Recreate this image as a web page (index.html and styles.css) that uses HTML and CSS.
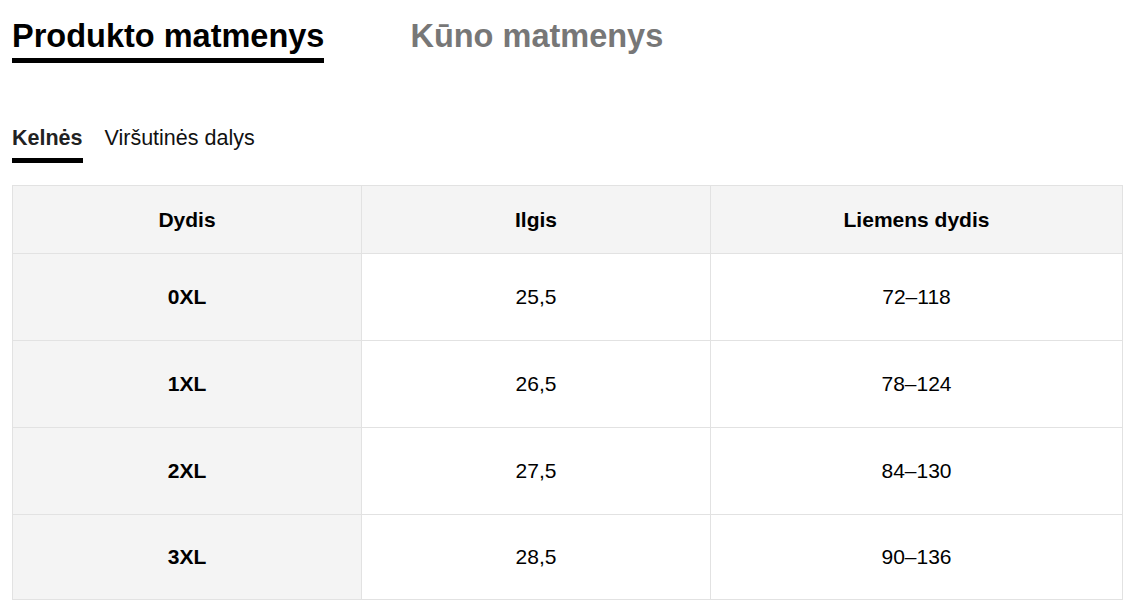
FILE: index.html
```html
<!DOCTYPE html>
<html lang="lt">
<head>
<meta charset="utf-8">
<title>Matmenys</title>
<link rel="stylesheet" href="styles.css">
</head>
<body>
<div class="page">
  <nav class="main-tabs">
    <div class="main-tab active">Produkto matmenys</div>
    <div class="main-tab">Kūno matmenys</div>
  </nav>
  <nav class="sub-tabs">
    <div class="sub-tab active">Kelnės</div>
    <div class="sub-tab">Viršutinės dalys</div>
  </nav>
  <table class="size-table">
    <colgroup>
      <col class="c1"><col class="c2"><col class="c3">
    </colgroup>
    <thead>
      <tr><th>Dydis</th><th>Ilgis</th><th>Liemens dydis</th></tr>
    </thead>
    <tbody>
      <tr><th>0XL</th><td>25,5</td><td>72–118</td></tr>
      <tr><th>1XL</th><td>26,5</td><td>78–124</td></tr>
      <tr><th>2XL</th><td>27,5</td><td>84–130</td></tr>
      <tr class="last"><th>3XL</th><td>28,5</td><td>90–136</td></tr>
    </tbody>
  </table>
</div>
</body>
</html>
```
FILE: styles.css
```css
* { box-sizing: border-box; }
html, body { margin: 0; padding: 0; background: #fff; }
body {
  font-family: "Liberation Sans", Arial, sans-serif;
  color: #000;
}
.page {
  padding: 17px 8px 0 12px;
}
.main-tabs {
  display: flex;
  gap: 86px;
  align-items: flex-start;
}
.main-tab {
  font-size: 32.5px;
  font-weight: 700;
  line-height: 38px;
  padding-bottom: 3px;
  color: #777;
  border-bottom: 5px solid transparent;
}
.main-tab.active {
  color: #000;
  border-bottom-color: #000;
}
.sub-tabs {
  display: flex;
  gap: 22px;
  margin-top: 62px;
  align-items: flex-start;
}
.sub-tab {
  font-size: 21.5px;
  line-height: 26px;
  padding-bottom: 7px;
  color: #111;
  border-bottom: 5px solid transparent;
}
.sub-tab.active {
  font-weight: 700;
  color: #222;
  border-bottom-color: #000;
}
.size-table {
  margin-top: 22px;
  width: 1110px;
  border-collapse: collapse;
  table-layout: fixed;
  font-size: 21px;
}
.size-table col.c1 { width: 349px; }
.size-table col.c2 { width: 349px; }
.size-table col.c3 { width: 412px; }
.size-table th,
.size-table td {
  border: 1px solid #e2e2e2;
  text-align: center;
  vertical-align: middle;
  padding: 0;
}
.size-table thead th {
  background: #f4f4f4;
  height: 68px;
  font-weight: 700;
}
.size-table tbody th {
  background: #f4f4f4;
  font-weight: 700;
  height: 87px;
}
.size-table tbody td {
  height: 87px;
  font-weight: 400;
}
.size-table tbody tr.last th,
.size-table tbody tr.last td {
  height: 85px;
}
```
